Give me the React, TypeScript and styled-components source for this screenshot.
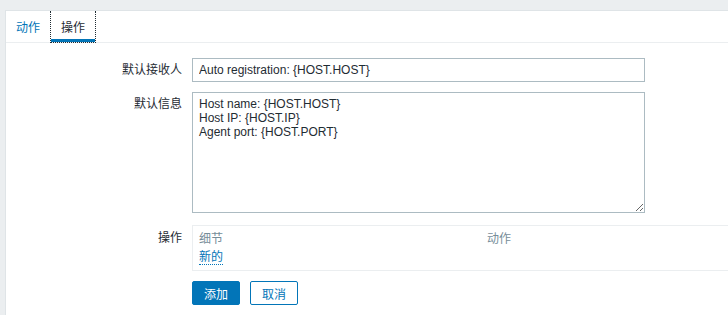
import React from "react";
import styled, { createGlobalStyle } from "styled-components";

const Global = createGlobalStyle`
  html, body { margin: 0; padding: 0; background: #ebeef0; overflow: hidden; height: 100%; }
  body {
    font-family: "Liberation Sans", Arial, "Noto Sans CJK SC", sans-serif;
    font-size: 12px;
    color: #1f2c33;
  }
  #root { height: 100%; }
`;

const Page = styled.div`
  box-sizing: border-box;
  height: 100%;
  padding: 10px 0 0 5px;
  display: flex;
  flex-direction: column;
`;

const Panel = styled.div`
  flex: 1;
  background: #fff;
  border: 1px solid #dfe4e7;
  border-right: none;
  border-bottom: none;
`;

const TabBar = styled.div`
  display: flex;
  height: 31px;
  border-bottom: 1px solid #ebeef0;
`;

const Tab = styled.div<{ $active?: boolean }>`
  display: flex;
  align-items: center;
  padding: 0 10px;
  box-sizing: border-box;
  height: 32px;
  margin-left: ${(p) => (p.$active ? "-1px" : "0")};
  color: ${(p) => (p.$active ? "#1f2c33" : "#0275b8")};
  border: 1px ${(p) => (p.$active ? "dotted #1f2c33" : "solid transparent")};
  border-top: none;
  border-left-width: ${(p) => (p.$active ? "1px" : "0")};
  box-shadow: ${(p) => (p.$active ? "inset 0 -3px 0 #0275b8" : "none")};
`;

const Form = styled.div`
  display: grid;
  grid-template-columns: 176px 1fr;
  column-gap: 10px;
  row-gap: 10px;
  padding-top: 15px;
`;

const Label = styled.div<{ $pad?: number; $line?: number }>`
  text-align: right;
  padding-top: ${(p) => p.$pad ?? 0}px;
  line-height: ${(p) => p.$line ?? 14}px;
`;

const TextInput = styled.input`
  box-sizing: border-box;
  width: 453px;
  height: 24px;
  border: 1px solid #acbbc2;
  padding: 0 6px;
  font: inherit;
  color: #1f2c33;
  outline: none;
  margin: 0;
`;

const TextArea = styled.textarea`
  box-sizing: border-box;
  width: 453px;
  height: 121px;
  border: 1px solid #acbbc2;
  padding: 4px 6px;
  font: inherit;
  line-height: 14px;
  color: #1f2c33;
  outline: none;
  margin: 0;
  display: block;
  resize: both;
`;

const OpsTable = styled.div`
  margin-top: 2px;
  border: 1px solid #ebeef0;
  border-right: none;
  display: grid;
  grid-template-columns: 288px 1fr;
  line-height: 14px;
`;

const HeadCell = styled.div`
  color: #768d99;
  padding: 6px 6px 3px;
`;

const Cell = styled.div`
  padding: 1px 6px 6px;
`;

const Link = styled.span`
  color: #0275b8;
  border-bottom: 1px dotted #0275b8;
`;

const Buttons = styled.div`
  display: flex;
  gap: 10px;
  grid-column: 2;
`;

const Button = styled.button<{ $alt?: boolean }>`
  box-sizing: border-box;
  height: 24px;
  width: 48px;
  border-radius: 2px;
  border: 1px solid #0275b8;
  background: ${(p) => (p.$alt ? "#fff" : "#0275b8")};
  color: ${(p) => (p.$alt ? "#0275b8" : "#fff")};
  font: inherit;
  padding: 0;
  margin: 0;
`;

export default function App() {
  return (
    <Page>
      <Global />
      <Panel>
        <TabBar>
          <Tab>动作</Tab>
          <Tab $active>操作</Tab>
        </TabBar>
        <Form>
          <Label $line={24}>默认接收人</Label>
          <div>
            <TextInput defaultValue="Auto registration: {HOST.HOST}" />
          </div>
          <Label $pad={5}>默认信息</Label>
          <div>
            <TextArea
              defaultValue={"Host name: {HOST.HOST}\nHost IP: {HOST.IP}\nAgent port: {HOST.PORT}"}
            />
          </div>
          <Label $pad={8}>操作</Label>
          <OpsTable>
            <HeadCell>细节</HeadCell>
            <HeadCell>动作</HeadCell>
            <Cell>
              <Link>新的</Link>
            </Cell>
            <Cell />
          </OpsTable>
          <Buttons>
            <Button>添加</Button>
            <Button $alt>取消</Button>
          </Buttons>
        </Form>
      </Panel>
    </Page>
  );
}
